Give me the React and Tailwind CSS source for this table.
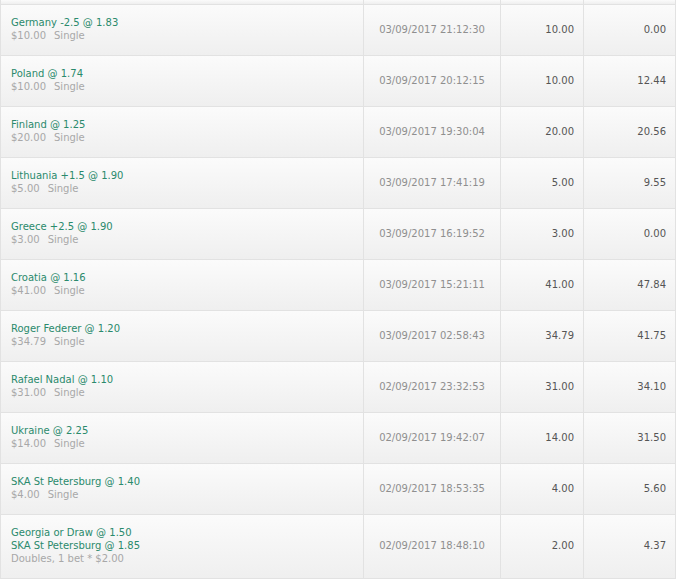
import React from "react";

const rows = [
  { lines: ["Germany -2.5 @ 1.83"], amt: "$10.00", type: "Single", date: "03/09/2017 21:12:30", stake: "10.00", ret: "0.00" },
  { lines: ["Poland @ 1.74"], amt: "$10.00", type: "Single", date: "03/09/2017 20:12:15", stake: "10.00", ret: "12.44" },
  { lines: ["Finland @ 1.25"], amt: "$20.00", type: "Single", date: "03/09/2017 19:30:04", stake: "20.00", ret: "20.56" },
  { lines: ["Lithuania +1.5 @ 1.90"], amt: "$5.00", type: "Single", date: "03/09/2017 17:41:19", stake: "5.00", ret: "9.55" },
  { lines: ["Greece +2.5 @ 1.90"], amt: "$3.00", type: "Single", date: "03/09/2017 16:19:52", stake: "3.00", ret: "0.00" },
  { lines: ["Croatia @ 1.16"], amt: "$41.00", type: "Single", date: "03/09/2017 15:21:11", stake: "41.00", ret: "47.84" },
  { lines: ["Roger Federer @ 1.20"], amt: "$34.79", type: "Single", date: "03/09/2017 02:58:43", stake: "34.79", ret: "41.75" },
  { lines: ["Rafael Nadal @ 1.10"], amt: "$31.00", type: "Single", date: "02/09/2017 23:32:53", stake: "31.00", ret: "34.10" },
  { lines: ["Ukraine @ 2.25"], amt: "$14.00", type: "Single", date: "02/09/2017 19:42:07", stake: "14.00", ret: "31.50" },
  { lines: ["SKA St Petersburg @ 1.40"], amt: "$4.00", type: "Single", date: "02/09/2017 18:53:35", stake: "4.00", ret: "5.60" },
  { lines: ["Georgia or Draw @ 1.50", "SKA St Petersburg @ 1.85"], sub: "Doubles, 1 bet * $2.00", date: "02/09/2017 18:48:10", stake: "2.00", ret: "4.37" },
];

const rowBg = "bg-gradient-to-b from-[#fbfbfb] to-[#efefef]";

function Row({ r }) {
  return (
    <div className={`flex border-l border-b border-[#e2e2e2] ${rowBg}`}>
      <div className="w-[363px] border-r border-[#e2e2e2] pl-[10px] pt-[11px] pb-[13px] leading-[13px]">
        {r.lines.map((l, i) => (
          <div key={i} className="text-[#2a8a6c]">{l}</div>
        ))}
        {r.sub ? (
          <div className="text-[#a8a8a8]">{r.sub}</div>
        ) : (
          <div className="text-[#a8a8a8]">
            <span className="mr-[8px]">{r.amt}</span>
            <span>{r.type}</span>
          </div>
        )}
      </div>
      <div className="w-[137px] border-r border-[#e2e2e2] flex items-center justify-center pb-[2px] text-[#8f8f8f]">
        {r.date}
      </div>
      <div className="w-[83px] border-r border-[#e2e2e2] flex items-center justify-end pr-[9px] pb-[2px] text-[#555]">
        {r.stake}
      </div>
      <div className="w-[92px] border-r border-[#e2e2e2] flex items-center justify-end pr-[9px] pb-[2px] text-[#555]">
        {r.ret}
      </div>
    </div>
  );
}

export default function App() {
  return (
    <div className="w-[680px] h-[583px] bg-white overflow-hidden text-[10px] font-['DejaVu_Sans',sans-serif]">
      <div className="w-[676px]">
        <div className={`flex h-[5px] border-l border-b border-[#e2e2e2] ${rowBg}`}>
          <div className="w-[363px] border-r border-[#e2e2e2]" />
          <div className="w-[137px] border-r border-[#e2e2e2]" />
          <div className="w-[83px] border-r border-[#e2e2e2]" />
          <div className="w-[92px] border-r border-[#e2e2e2]" />
        </div>
        {rows.map((r, i) => (
          <Row key={i} r={r} />
        ))}
      </div>
    </div>
  );
}
